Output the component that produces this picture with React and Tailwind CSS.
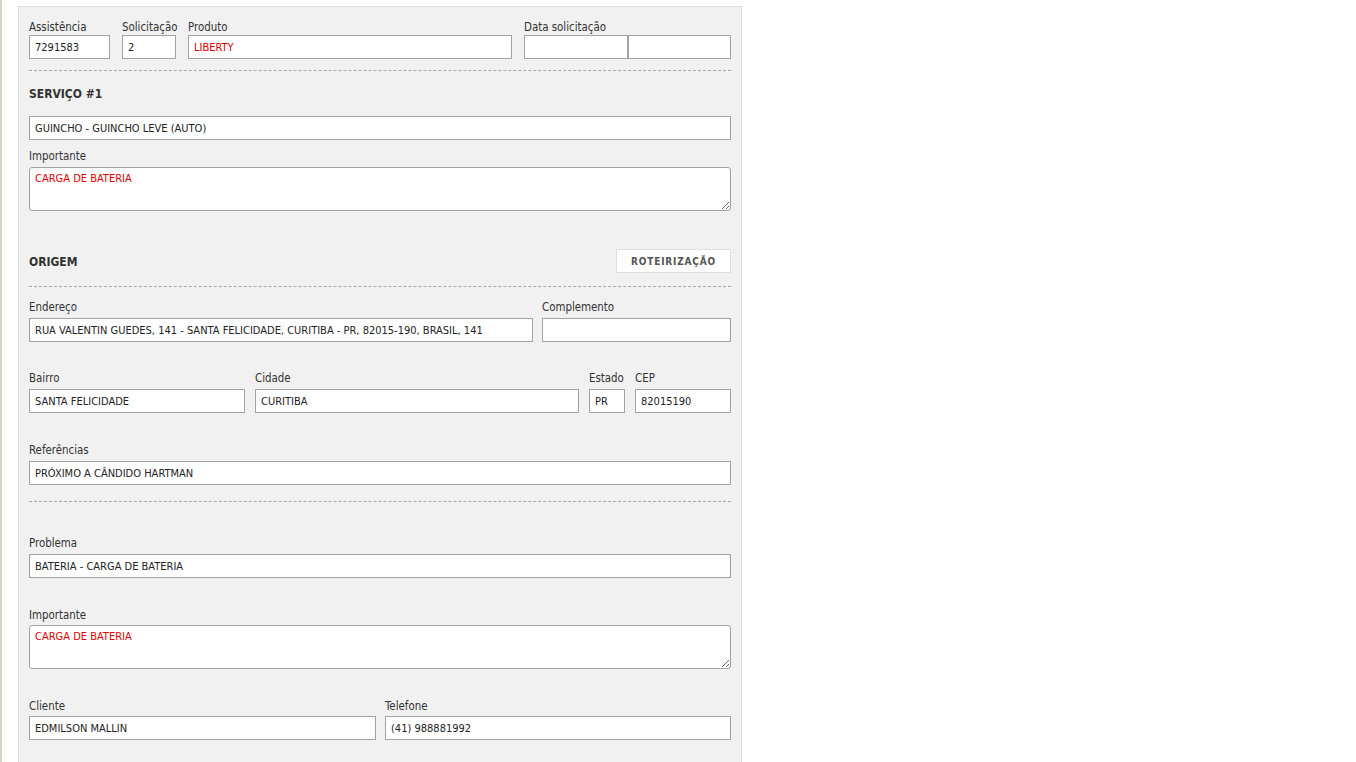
import React from "react";

const font = { fontFamily: "Tahoma, 'DejaVu Sans Condensed', 'Liberation Sans', sans-serif" };

function Label({ children, className = "" }) {
  return <div className={"h-[17px] pt-[1px] leading-[16px] text-[11.4px] text-[#333] whitespace-nowrap " + className}>{children}</div>;
}

function Input({ value = "", className = "", red = false }) {
  return (
    <input
      readOnly
      defaultValue={value}
      className={
        "block h-[24px] border border-[#a3a3a3] bg-white px-[5px] text-[11px] outline-none " +
        (red ? "text-[#e00000] " : "text-[#222] ") +
        className
      }
      style={font}
    />
  );
}

function Area({ value }) {
  return (
    <textarea
      readOnly
      defaultValue={value}
      className="block h-[44px] w-full rounded-[3px] border border-[#a3a3a3] bg-white px-[5px] py-[4px] text-[11px] leading-[13px] text-[#e00000] outline-none"
      style={font}
    />
  );
}

function Dashed() {
  return <div className="h-0 border-t border-dashed border-[#a8a8a8]" />;
}

export default function App() {
  return (
    <div className="flex min-h-[762px] bg-white" style={font}>
      <div className="w-[2px] bg-[#d7d4c7]" />
      <div className="ml-[16px] mt-[6px] w-[724px] border border-[#dcdcdc] bg-[#f1f1f1] px-[10px] pt-[11px] pb-[30px]">
        {/* Row 1 */}
        <div className="flex">
          <div className="w-[81px]">
            <Label>Assistência</Label>
            <Input value="7291583" className="w-[81px]" />
          </div>
          <div className="ml-[12px] w-[54px]">
            <Label>Solicitação</Label>
            <Input value="2" className="w-[54px]" />
          </div>
          <div className="ml-[12px] w-[324px]">
            <Label>Produto</Label>
            <Input value="LIBERTY" red className="w-[324px]" />
          </div>
          <div className="ml-[12px] w-[207px]">
            <Label>Data solicitação</Label>
            <div className="flex">
              <Input className="w-[104px]" />
              <Input className="w-[103px]" />
            </div>
          </div>
        </div>

        <div className="mt-[11px]">
          <Dashed />
        </div>

        <div className="mt-[15px] h-[16px] leading-[16px] text-[12px] font-bold text-[#333]">SERVIÇO #1</div>

        <Input value="GUINCHO - GUINCHO LEVE (AUTO)" className="mt-[14px] w-full" />

        <Label className="mt-[7px]">Importante</Label>
        <div className="mt-[3px]">
          <Area value="CARGA DE BATERIA" />
        </div>

        <div className="mt-[38px] flex h-[24px] items-center justify-between">
          <div className="pt-[2px] text-[12px] font-bold text-[#333]">ORIGEM</div>
          <button className="h-[24px] w-[115px] border border-[#dedede] bg-white text-[10px] font-bold tracking-[0.8px] text-[#555]">
            ROTEIRIZAÇÃO
          </button>
        </div>

        <div className="mt-[13px]">
          <Dashed />
        </div>

        <div className="mt-[11px] flex">
          <div className="w-[504px]">
            <Label>Endereço</Label>
            <Input
              value="RUA VALENTIN GUEDES, 141 - SANTA FELICIDADE, CURITIBA - PR, 82015-190, BRASIL, 141"
              className="mt-[3px] w-[504px]"
            />
          </div>
          <div className="ml-[9px] flex-1">
            <Label>Complemento</Label>
            <Input className="mt-[3px] w-full" />
          </div>
        </div>

        <div className="mt-[27px] flex">
          <div className="w-[216px]">
            <Label>Bairro</Label>
            <Input value="SANTA FELICIDADE" className="mt-[3px] w-[216px]" />
          </div>
          <div className="ml-[10px] w-[324px]">
            <Label>Cidade</Label>
            <Input value="CURITIBA" className="mt-[3px] w-[324px]" />
          </div>
          <div className="ml-[10px] w-[36px]">
            <Label>Estado</Label>
            <Input value="PR" className="mt-[3px] w-[36px]" />
          </div>
          <div className="ml-[10px] flex-1">
            <Label>CEP</Label>
            <Input value="82015190" className="mt-[3px] w-full" />
          </div>
        </div>

        <Label className="mt-[28px]">Referências</Label>
        <Input value="PRÓXIMO A CÂNDIDO HARTMAN" className="mt-[3px] w-full" />

        <div className="mt-[16px]">
          <Dashed />
        </div>

        <Label className="mt-[32px]">Problema</Label>
        <Input value="BATERIA - CARGA DE BATERIA" className="mt-[3px] w-full" />

        <Label className="mt-[28px]">Importante</Label>
        <div className="mt-[2px]">
          <Area value="CARGA DE BATERIA" />
        </div>

        <div className="mt-[28px] flex">
          <div className="w-[347px]">
            <Label>Cliente</Label>
            <Input value="EDMILSON MALLIN" className="mt-[2px] w-[347px]" />
          </div>
          <div className="ml-[9px] flex-1">
            <Label>Telefone</Label>
            <Input value="(41) 988881992" className="mt-[2px] w-full" />
          </div>
        </div>
      </div>
    </div>
  );
}
